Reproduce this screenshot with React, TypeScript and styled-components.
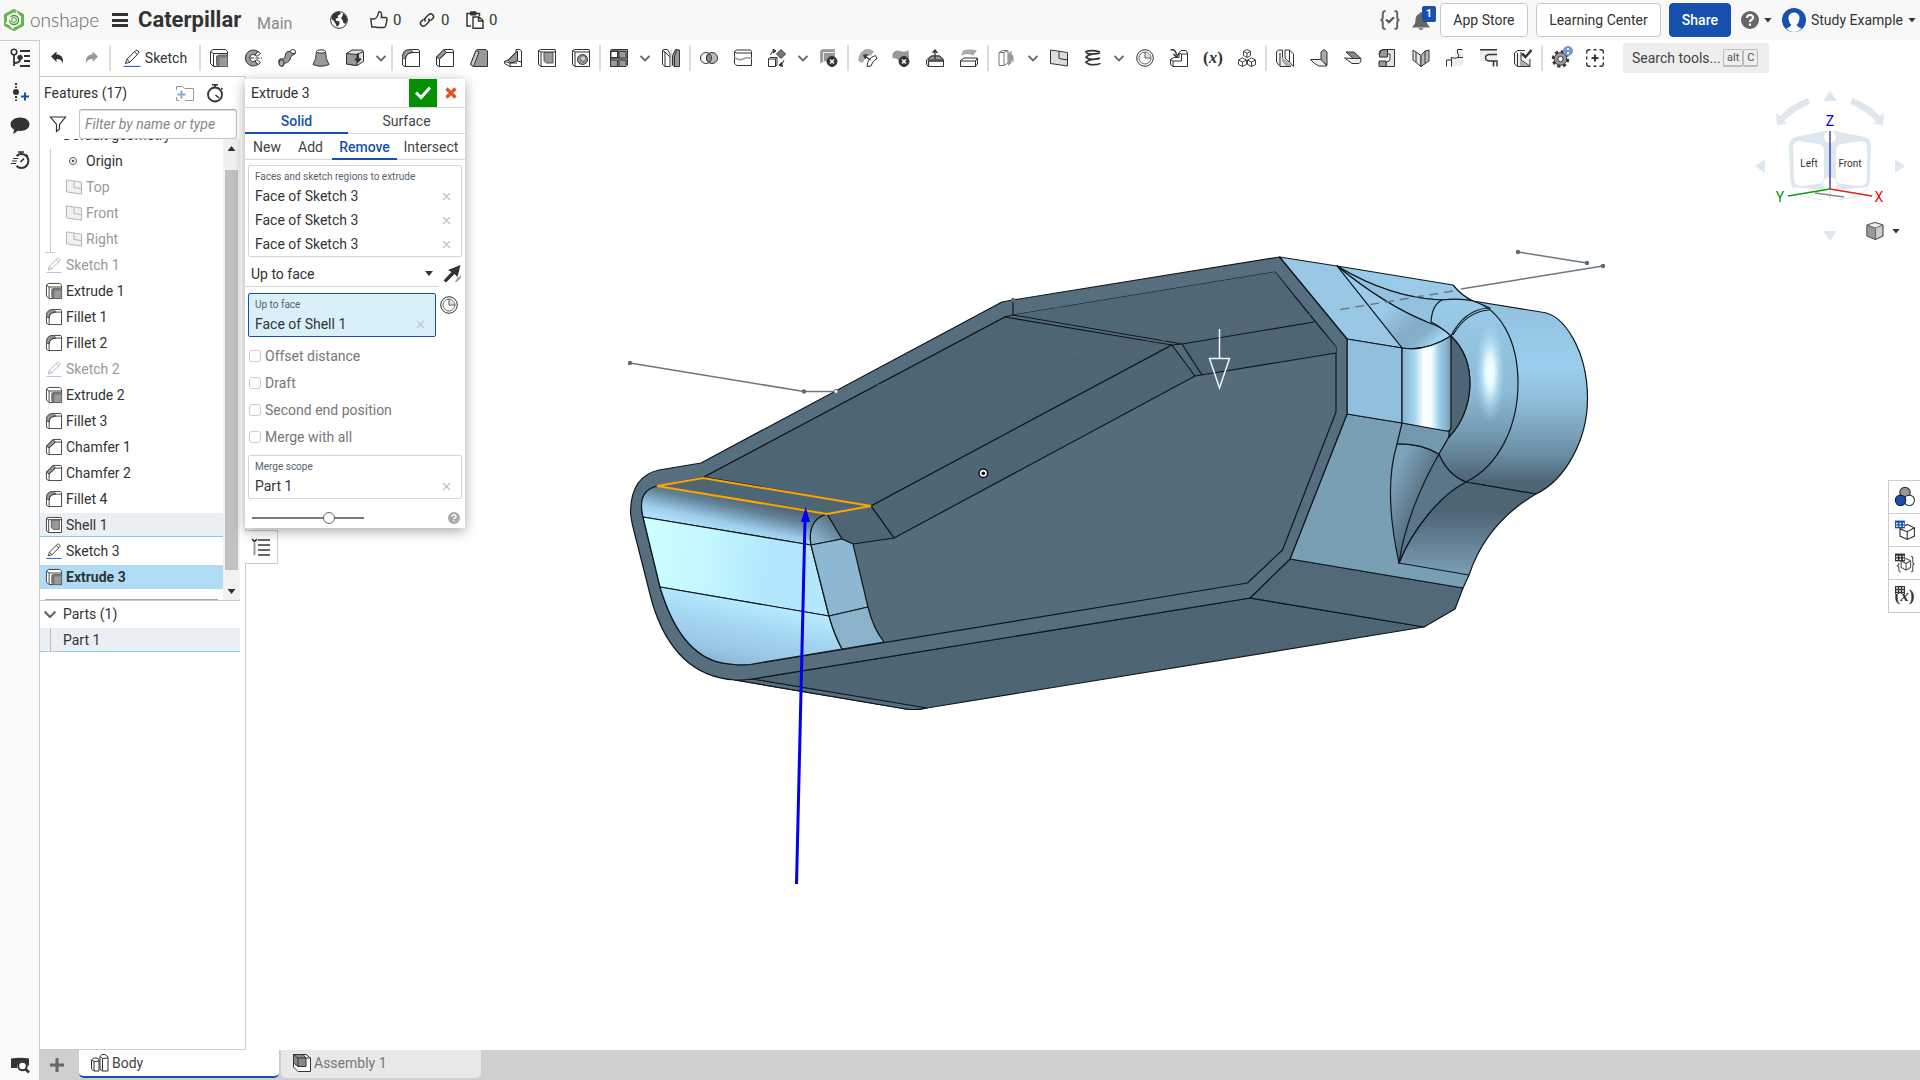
import React from "react";
import styled, { createGlobalStyle, css } from "styled-components";

const ink = "#333333";
const blue = "#1651b0";
const line = "#cccccc";
const gray = "#999999";

const Global = createGlobalStyle`
  *, *::before, *::after { box-sizing: border-box; }
  body { margin: 0; background: #fff; }
  body, button, input, select { font-family: Roboto, "Liberation Sans", sans-serif; font-size: 14px; color: ${ink}; }
  button { border: 0; padding: 0; background: none; cursor: pointer; }
  svg { display: block; flex: none; }
`;

/* ---------- icons, drawn on an 18 unit grid ---------- */

const shapes: Record<string, React.ReactNode> = {
  undo: <path d="M3 7.5L8.5 2.5V5.5C13 5.5 15.5 8 15 14.5C13.500 11 12 10 8.500 10V13Z" fill={ink} stroke="none" />,
  redo: <path d="M16 7.500L10.500 2.500V5.500C6 5.500 3.500 8 4 14.500C5.500 11 7 10 10.500 10V13Z" fill="#999" stroke="none" />,
  sketch: (
    <>
      <path d="M2.500 14.500L3.800 10.300L12.800 1.500Q14 .8 15.200 2T15.500 4.300L6.800 13.200ZM3.800 10.300L6.800 13.200M11.500 2.800L14.400 5.600" fill="#fff" />
      <path d="M.5 17.400H17.500" stroke={blue} />
    </>
  ),
  extrude: (
    <>
      <path d="M.5 2.500L3 .5H15.500L17.500 2.500V17.500H3.500L.5 14.500ZM3.500 17.500V4.500H17.500M.5 2.500L3.500 4.500" fill="#fff" />
      <path d="M6.500 7L9 6H17.500V17.500H9L6.500 16Z" fill="#777" stroke="#666" />
      <path d="M9.500 8.500H17V17H9.500Z" fill="#999" stroke="none" />
    </>
  ),
  revolve: (
    <>
      <path d="M14 2.500A8 8 0 1 0 14 15.500L11 12A3.500 3.500 0 1 1 11 6Z" fill={gray} />
      <path d="M11 6L14 2.500L16.500 4.500L13 7.300ZM11 12L14 15.500L16.500 13.500L13 10.700Z" fill="#fff" />
      <path d="M6 9H18" strokeDasharray="4 1.500" />
    </>
  ),
  sweep: (
    <>
      <path d="M.8 12C1 9 4 10 6 9.500C8 8.500 6.500 3.500 10 2.500L13 2.200L17.300 3.500C17.500 6.500 13 5.500 12.500 8.500C12 13 9 13.500 6.500 14.500C5.500 15.500 6 17.500 3.500 17.300C1.500 17 .8 14 .8 12Z" fill={gray} />
      <ellipse cx="15" cy="2.600" rx="2.500" ry="2" fill="#fff" />
      <ellipse cx="3.500" cy="14" rx="2.500" ry="3.200" fill="#aaa" />
    </>
  ),
  loft: (
    <>
      <path d="M4.500 2.500Q4.500 10 1 15.500Q9 19 17 15.500Q13.500 10 13.500 2.500Z" fill={gray} />
      <ellipse cx="9" cy="2.500" rx="4.500" ry="1.700" fill="#eee" />
    </>
  ),
  thicken: (
    <>
      <path d="M.5 4.500L6 1H16L17.500 2.500V12.500L11 16.500L.5 15Z" fill="#ddd" />
      <path d="M.5 4.500L11 5.500V16.500L.5 15Z" fill={gray} />
      <path d="M11 5.500L17.300 2.500" />
      <path d="M12 4.500V12M9.300 9.500L12 12.500L14.700 9.500" strokeWidth="2" />
    </>
  ),
  fillet: (
    <>
      <path d="M.5 16V7Q1 .5 8 .5H16.500L17.500 2V17.500H3Z" fill="#fff" />
      <path d="M.5 9Q.5 .5 9 .5L11 3.500Q4 3.500 3.500 10Z" fill={gray} stroke="#555" />
      <path d="M3.500 17.500V10Q4 3.500 11 3.500H17.500" />
    </>
  ),
  chamfer: (
    <>
      <path d="M.5 16V8L8 .5H16.500L17.500 2V17.500H3Z" fill="#fff" />
      <path d="M.5 8L8 .5L10.500 3.500L3.500 10Z" fill={gray} />
      <path d="M3.500 17.500V10L10.500 3.500H17.500" />
    </>
  ),
  draft: (
    <>
      <path d="M.5 15.500L6 1.500L8 .5H16L17.500 2V17.500H3.500Z" fill={gray} />
      <path d="M.5 15.500L6 1.500L9 3L3.500 17.500Z" fill="#ccc" />
    </>
  ),
  rib: (
    <>
      <path d="M.5 12.500L4 11L12 3V.5H15.500L17.500 2V17.500H6L.5 14.500Z" fill="#fff" />
      <path d="M4 11.500L13.500 2V12L7 14Z" fill={gray} />
      <path d="M13.500 2V12L17.500 13M.5 12.500L6 14V17.500M6 14H13" />
    </>
  ),
  shell: (
    <>
      <path d="M.5 1.500L2.500 .5H17L17.500 2V17.500H3L.5 15.500ZM3 17.500V3H17.500M.5 1.500L3 3" fill="#fff" />
      <path d="M6 3.500H15V14H8.500L6 12Z" fill={gray} stroke="#555" />
    </>
  ),
  hole: (
    <>
      <path d="M.5 1.500L2.500 .5H17L17.500 2V17.500H3L.5 15.500ZM3 17.500V3H17.500M.5 1.500L3 3" fill="#fff" />
      <circle cx="10.500" cy="10.500" r="5" fill={gray} />
      <circle cx="11" cy="9.500" r="2.800" fill="#ccc" stroke="#666" />
    </>
  ),
  pattern: (
    <>
      <path d="M.5 1.500L2 .5H17.500V16L16 17.500H.5Z" fill={gray} />
      <path d="M1 2H8V8.500H1Z" fill="#fff" />
      <path d="M9 .5V17.500M.5 9H17.500M7.500 2V8M7.500 11V17M16 2.500V8M16 11V16M1 2.500H7M10 2.500H16M1 11H7M10 11H16" />
    </>
  ),
  mirror: (
    <>
      <path d="M.5 1.500L2 .5H5.500L8 5V17.500H3L.5 15.500ZM3 17.500V3L.5 1.500M3 3L8 8" fill="#fff" />
      <path d="M10.500 6.500L13.500 .5L17.500 1V17.500H12L10.500 16Z" fill={gray} />
      <path d="M12.500 17V7L15 1" />
      <path d="M9.300 0V18" stroke="#ccc" />
    </>
  ),
  boolean: (
    <>
      <circle cx="6" cy="9" r="5.500" fill="#fff" />
      <circle cx="12" cy="9" r="5.500" fill="#bbb" />
      <path d="M9 4.400A5.500 5.500 0 0 1 9 13.600A5.500 5.500 0 0 1 9 4.400Z" fill="#888" />
    </>
  ),
  split: (
    <>
      <path d="M.5 2.500L2.500 1H16.500L17.500 2.500V16.500H3L.5 14.500ZM.5 3L3 4H17.500" fill="#fff" />
      <path d="M0 8Q5 12 9 10T18 9.500" stroke="#999" strokeWidth="1.500" />
    </>
  ),
  transform: (
    <>
      <path d="M13 .5L17.500 5L13 9.500L8.500 5Z" fill="#777" />
      <path d="M.5 10L2 8.500H9V16L7.500 17.500H.5ZM.5 10H7.500V17.500M7.500 10L9 8.500" fill="#fff" />
      <path d="M2.500 6Q3 2.500 6.500 2M16 11Q15 15 12 16" />
      <path d="M5 .2L8 1.800L5.500 4ZM13.500 13.500L11 16.300L14.500 17.500Z" fill={ink} />
    </>
  ),
  deletePart: (
    <>
      <path d="M.5 2L2 .5H14.500V12H3.500L.5 14Z" fill={gray} stroke="#aaa" />
      <path d="M3.500 12V3.500H14.500" stroke="#eee" />
      <circle cx="12" cy="12.500" r="5" fill={ink} />
      <path d="M10 10.500L14 14.500M14 10.500L10 14.500" stroke="#fff" strokeWidth="1.500" />
    </>
  ),
  modifyFillet: (
    <>
      <path d="M0 12Q1 3 7 .5Q12 -1 16 2.500L13 6.500Q7 6 5 14Z" fill="#aaa" stroke="none" />
      <path d="M9 17.500Q9.500 9 17.500 6.500L19 9.500Q14 12 13 17Z" fill="#fff" />
      <path d="M12.500 11L6 6.500M9.800 5.800L6 6.300L7.500 9.800" strokeWidth="1.500" />
    </>
  ),
  deleteFace: (
    <>
      <path d="M.5 5Q3 0 8 2T16.500 1L17 9L9 14Q6 9 .5 9Z" fill={gray} stroke="none" />
      <circle cx="12" cy="12.500" r="5" fill={ink} />
      <path d="M10 10.500L14 14.500M14 10.500L10 14.500" stroke="#fff" strokeWidth="1.500" />
    </>
  ),
  moveFace: (
    <>
      <path d="M.5 11L5 7H14L17.500 11V17.500H2.500L.5 15.500Z" fill="#fff" />
      <path d="M2 10.500L5.500 7H14L17 11H3Z" fill={gray} />
      <path d="M2.500 17.500V12H17.500M9 10V2M6.500 4L9 1L11.500 4" strokeWidth="1.300" />
    </>
  ),
  replaceFace: (
    <>
      <path d="M3 1.500Q9 -.5 17 1.500L13 6.500Q8 3.500 1 6.500Z" fill="#aaa" stroke="none" />
      <path d="M.5 11.500L4 9H17.500V15L15.500 17.500H.5ZM.5 12H15.500V17.500M15.500 12L17.500 9" fill="#fff" />
    </>
  ),
  sheet: (
    <>
      <path d="M1 3.500L5 1.500H10V14L6 16.500H1ZM1 3.500H6V16.500M6 3.500L10 1.500" fill="#fff" stroke="#777" />
      <path d="M10 5L13.500 1.500V14L10 17ZM12.500 4L15.500 7V13L12.500 11Z" fill={gray} stroke="none" />
    </>
  ),
  plane: (
    <>
      <path d="M.5 1L17.500 3.500V17L.5 14.500Z" fill="#ddd" />
      <path d="M9 2.500V9.500L17.500 11" />
    </>
  ),
  helix: (
    <path d="M16 3Q8 .5 2 2.500Q2 5 8 5T16 3.500M15 4.500Q5 5 2 8Q4 10.500 9 10.300T16 9M15 10Q6 10 2 13Q4 16 10 15.700T16 14" strokeWidth="1.700" />
  ),
  clock: (
    <>
      <circle cx="9" cy="9" r="8.300" fill="#fff" />
      <circle cx="9" cy="9" r="6" fill="#fff" stroke="#666" />
      <path d="M9.500 3.500Q14 4 14.500 8.500H9.500Z" fill="#ddd" stroke="none" />
      <path d="M9 3V9H15" stroke="#555" />
    </>
  ),
  derived: (
    <>
      <path d="M.5 10.500L4 8.500H9V4L11 1.500H16L17.500 4V17.500H3L.5 15.500ZM.5 10.500L3 12H11.500V5H17.500M3 12V17.500M9 4L11.500 5" fill="#fff" />
      <path d="M.5 1Q6 0 6.500 6M3.500 5L6.500 8L9 4.500" strokeWidth="1.500" />
    </>
  ),
  cubes: (
    <path d="M9 .5L12.500 2.300V6.500L9 8.500L5.500 6.500V2.300ZM5.500 2.300L9 4.300L12.500 2.300M9 4.300V8.500M4.500 8.800L8.500 11V15.500L4.500 17.500L.5 15.500V11ZM.5 11L4.500 13L8.500 11M4.500 13V17.500M13.500 8.800L17.500 11V15.500L13.500 17.500L9.500 15.500V11ZM9.500 11L13.500 13L17.500 11M13.500 13V17.500" stroke="#444" fill="#fff" />
  ),
  sm1: (
    <>
      <path d="M.5 2.500L2.500 1H6.500V12L15 17.500H4L.5 13Z" fill="#eee" />
      <path d="M6 8L16 17H10L6 12Z" fill="#aaa" stroke="none" />
      <path d="M9 9V1H13.500L17.500 5V17.500L13.500 13V1M9 9L13 13M4 4V17" />
    </>
  ),
  sm2: (
    <>
      <path d="M11 3L14 .5L17 3V16L11 12Z" fill="#aaa" />
      <path d="M.5 10.500H11L17 17H9Q4 15 .5 10.500Z" fill="#eee" />
    </>
  ),
  sm3: (
    <>
      <path d="M2 3H10L17 9.500H9Z" fill="#888" />
      <path d="M.5 9L9 9.500H17Q17 14.500 14 14.500H8Z" fill="#eee" />
    </>
  ),
  sm4: (
    <>
      <path d="M5 .5H16.500V17.500H8V13Q12 13 12 9.500V5H4.500V8Q1 8 1 4.500Q1 1 5 .5Z" fill="#e4e4e4" />
      <path d="M1.500 5Q2 1 5 .8H9.500V8H1.500ZM1 12H8V17.500H1Z" fill="#999" />
    </>
  ),
  sm5: (
    <>
      <path d="M1 1L9 6.500V17.500L1 11Z" fill="#e4e4e4" />
      <path d="M9 6.500L13 2L17 1V12L9 17.500Z" fill="#bbb" />
      <path d="M4 3V13M13 2V14" />
    </>
  ),
  sm6: (
    <>
      <path d="M9 1H17V10H9ZM1 9H17V17H6V12H1Z" fill="#eee" stroke="none" />
      <path d="M16.500 .5H11.500V4Q14 6 12 8.500Q9 10 6 8.500Q5 7 5.500 11H.5M.5 11V17.500M5.500 17.500V11M12 8.500H17" />
    </>
  ),
  sm7: (
    <>
      <path d="M0 1H17V17H12V12H0Z" fill="#eee" stroke="none" />
      <path d="M0 .7H17M17 5.500H9Q5.500 6 5.500 9Q6 12 9 12H17V17.500M13.500 12V17.500" strokeWidth="1.400" />
    </>
  ),
  sm8: (
    <>
      <path d="M.5 4L3.500 1.500H11M.5 4V15L3.500 17.500H16V10M3.500 4V17M7 3V11L16 17" fill="#eee" />
      <path d="M6 11L15 17H6Z" fill="#aaa" stroke="none" />
      <path d="M8 4.500L11.500 8L17.500 1" strokeWidth="2.500" />
    </>
  ),
  gear: (
    <>
      <circle cx="8.500" cy="10" r="7.500" strokeWidth="2.500" strokeDasharray="3.200 2.690" />
      <circle cx="8.500" cy="10" r="6.300" fill={gray} />
      <circle cx="8.500" cy="10" r="2.700" fill="#fff" />
      <circle cx="16" cy="2" r="5" fill="#6f9bd1" stroke="none" />
      <path d="M16 -1V1M16 3V5" stroke="#fff" strokeWidth="1.700" />
    </>
  ),
  addTool: (
    <>
      <path d="M.7 4.500V3Q.7 .7 3 .7H4.500M7.500 .7H10.500M13.500 .7H15Q17.300 .7 17.300 3V4.500M17.300 7.500V10.500M17.300 13.500V15Q17.300 17.300 15 17.300H13.500M10.500 17.300H7.500M4.500 17.300H3Q.7 17.300 .7 15V13.500M.7 10.500V7.500" strokeWidth="1.400" />
      <path d="M9 5.500V12.500M5.500 9H12.500" strokeWidth="2" />
    </>
  ),
  featureList: (
    <>
      <circle cx="3" cy="3" r="2.800" strokeWidth="1.500" />
      <path d="M3 6V17M3 14Q8.500 14 9 11M9 2H19M13 7H19M13 12H19M9 17H19" strokeWidth="1.800" />
      <circle cx="9" cy="8.500" r="2.300" fill={ink} />
    </>
  ),
  insertFeature: (
    <>
      <path d="M5 0V2M5 3.500V5M5 13V15M5 16.500V18" strokeWidth="2" />
      <circle cx="5" cy="9" r="3" fill={ink} stroke="none" />
      <path d="M14 9.500V17.500M10 13.500H18" stroke={blue} strokeWidth="2" />
    </>
  ),
  comment: <path d="M9 .5C14.500 .5 18.500 3.300 18.500 7.300S14.500 14 9 14Q7.500 14 6.500 13.800Q4.500 16.500 1.500 16.800Q3.200 15 3 12.600Q-.5 10.800 -.5 7.300C-.5 3.300 4 .5 9 .5Z" fill={ink} stroke="none" />,
  history: (
    <>
      <path d="M5.500 5A7 7 0 1 1 5.500 15" strokeWidth="2" />
      <path d="M7 1H13M10 1V4M15 3.500L17 5.500M9.500 11L13 7.500" strokeWidth="1.700" />
      <path d="M2 7.500H7M1 10H6M0 12.500H5" strokeWidth="1.200" />
    </>
  ),
  findTab: (
    <>
      <path d="M0 2.500Q9 1 18 2.500V10L12 5Q6 5 6 12H0Z" fill={ink} stroke="none" />
      <circle cx="11.500" cy="10" r="4.300" fill="#fff" strokeWidth="2" />
      <path d="M14.500 13L18 16.500" strokeWidth="2.500" />
    </>
  ),
  stopwatch: (
    <>
      <circle cx="9" cy="10.500" r="7" strokeWidth="1.800" />
      <path d="M6 .8H12M9 1V4M15 4L16.500 5.500M9.500 11L13 14" strokeWidth="1.600" />
    </>
  ),
  newFolder: (
    <>
      <path d="M.5 6V2.500H6.500L8.500 4.500H17.500V16.500H9M.5 13V16.500H3" stroke="#999" />
      <path d="M5.500 6.500V14.500M1.500 10.500H9.500" stroke="#86a9d8" strokeWidth="2" />
    </>
  ),
  filter: <path d="M1.500 2H16.500L10.500 9.500V14L7.500 16.500V9.500Z" strokeWidth="1.200" />,
  origin: (
    <>
      <circle cx="9" cy="9" r="3.500" stroke="#555" />
      <circle cx="9" cy="9" r="1.300" fill="#555" stroke="none" />
    </>
  ),
  globe: (
    <>
      <circle cx="9" cy="9" r="8.400" fill="#fff" />
      <path d="M2 4.500Q4.500 1 9 .8L11 2.500L7.500 5L8.500 6.500L5.500 8L6.500 10L9.500 10.500L9.500 13L7 16L5.500 12.500L3.500 9.500L1.500 8ZM13 2L16 5L17.200 9L15.500 13L13.500 12L12.500 9L11 7L12.500 5Z" fill={ink} stroke="none" />
    </>
  ),
  thumb: <path d="M.8 8H4.500Q8 6 8.300 2Q8.500 .6 10 .8Q12.300 1.500 11.300 6.500H16Q17.500 7 17 8.500L15.800 14.500Q15.500 16.300 14 16.500H8Q6 16 4.500 16H1.800Z" strokeWidth="1.400" />,
  link: <path d="M7.500 10.500Q5.800 8.500 7.500 6.800L11 3.300Q13 2 14.700 3.700T15 7.300L12.500 9.800M10.500 7.500Q12.200 9.500 10.500 11.200L7 14.700Q5 16 3.300 14.300T3 10.700L5.500 8.200" strokeWidth="1.500" />,
  copy: (
    <>
      <path d="M5 15H1V2.500H4.500M10 2.500H13.500V5" strokeWidth="1.500" />
      <path d="M4.500 .8H10V4H4.500Z" fill={ink} />
      <path d="M7 6H13L17 9.500V17.300H7ZM12.500 6V10H17" fill="#fff" strokeWidth="1.400" />
    </>
  ),
  bracesCheck: (
    <>
      <path d="M5 1Q2.500 1 2.500 3V6.500Q2.500 9 .5 9Q2.500 9 2.500 11.500V15Q2.500 17 5 17M13 1Q15.500 1 15.500 3V6.500Q15.500 9 17.500 9Q15.500 9 15.500 11.500V15Q15.500 17 13 17" stroke="#666" strokeWidth="1.800" />
      <path d="M5.500 8.500L8 11L12.500 6.500" stroke="#555" strokeWidth="2" />
    </>
  ),
  bell: <path d="M9 0Q10.300 0 10.300 1.800Q14.500 3 14.500 8Q14.500 12 17.500 14.500V15.500H.5V14.500Q3.500 12 3.500 8Q3.500 3 7.700 1.800Q7.700 0 9 0ZM6.500 16.300H11.500Q11 18 9 18T6.500 16.300Z" fill="#666" stroke="none" />,
  help: (
    <>
      <circle cx="9" cy="9" r="9" fill="#666" stroke="none" />
      <path d="M6 6.800Q6.200 4 9 4T12 6.500Q12 8 10.500 8.800Q9 9.500 9 11M9 12.500V14.700" stroke="#fff" strokeWidth="2.200" />
    </>
  ),
  flip: (
    <>
      <path d="M17.500 0L14.500 12L11.500 9L3 17.500L.5 15.500L8.500 7L5 5Z" fill={ink} stroke="none" />
      <path d="M18.500 10L17 14L13 17.500L12 16.500L15 12.500Z" fill="#999" stroke="none" />
    </>
  ),
  outline: (
    <>
      <path d="M6 2H18M6 7H18M6 12H18M6 17H18" strokeWidth="1.300" />
      <path d="M2.500 5V17" stroke="#999" strokeWidth="2" />
      <path d="M0 1L2.500 3.500L5 1" strokeWidth="1.700" />
    </>
  ),
  body: (
    <>
      <path d="M.5 6L3 4H6L8 5.500V17H3L.5 15ZM3 17V7.500L.5 6M3 7.500L8 7" fill="#fff" />
      <path d="M9 2.500L11 .5H14L17 3V17H11.500L9 15ZM11.500 17V4.500L9 2.500M11.500 4.500L17 4" fill="#fff" />
    </>
  ),
  assembly: (
    <>
      <path d="M.5 .5H13L17.500 4V17.500H5L.5 13ZM17.500 4H13" fill="#fff" />
      <path d="M.5 .5H10L13 4V12.500H5L.5 9Z" fill="#888" />
      <path d="M.5 .5L5 4H13M5 4V12.500" />
    </>
  ),
  appearance: (
    <>
      <circle cx="9" cy="5" r="4.700" fill="#999" />
      <circle cx="12.800" cy="12" r="4.700" fill="#fff" />
      <circle cx="5" cy="12" r="4.700" fill={blue} stroke="#123" />
    </>
  ),
  partTable: (
    <>
      <path d="M11 4L17.500 7V14.500L11 17.500L4.500 14.500V8ZM4.500 8L11 10.500L17.500 7M11 10.500V17.500" fill="#fff" />
      <path d="M0 .5H9V7.500H0Z" fill={blue} stroke="none" />
      <path d="M1 3.200H2.500M4 3.200H5.500M7 3.200H8.500M1 5.600H2.500M4 5.600H5.500M7 5.600H8.500" stroke="#fff" strokeWidth="1.400" />
    </>
  ),
  cutTable: (
    <>
      <path d="M10 5L14 7V13L10 15.500L5.500 13V7ZM5.500 7L10 9.500L14 7M10 9.500V15.500" fill="#fff" stroke="#555" />
      <path d="M3.500 9Q3.500 11.500 1.500 11.500Q3.500 11.500 3.500 14V16L5 17.500M14.500 3Q16 3 16 5V8Q16 10 17.500 10Q16 10 16 12V15Q16 17 14.500 17" stroke="#555" />
      <path d="M0 .5H9V7.500H0Z" fill={ink} stroke="none" />
      <path d="M1 3.200H2.500M4 3.200H5.500M7 3.200H8.500M1 5.600H2.500M4 5.600H5.500M7 5.600H8.500" stroke="#fff" strokeWidth="1.400" />
    </>
  ),
  viewCube: (
    <>
      <path d="M9 .5L17 3V14L9.500 17.500L1 14V3Z" fill="#ccc" />
      <path d="M1 3L9.500 6V17.500L1 14Z" fill="#999" stroke="#666" />
      <path d="M1 3L9 .5L17 3L9.500 6Z" fill="#eee" stroke="#666" />
    </>
  ),
};

type IconProps = { name: string; size?: number; dim?: boolean };
const Icon = ({ name, size = 18, dim }: IconProps) => (
  <svg width={size} height={size} viewBox="0 0 18 18" fill="none" stroke={ink} strokeWidth="1" opacity={dim ? 0.4 : 1} overflow="visible" aria-hidden="true">
    {shapes[name]}
  </svg>
);

const Caret = styled.span`
  width: 8px;
  height: 5px;
  flex: none;
  background: ${ink};
  clip-path: polygon(0 0, 100% 0, 50% 100%);
`;

const Chevron = ({ size = 10 }: { size?: number }) => (
  <svg width={size} height={size} viewBox="0 0 10 10" fill="none" stroke="#666" strokeWidth="1.800" aria-hidden="true">
    <path d="M.5 3L5 7.500L9.500 3" />
  </svg>
);

/* ---------- page frame ---------- */

const Page = styled.div`
  display: flex;
  flex-direction: column;
  height: 100vh;
  overflow: hidden;
`;

const Header = styled.header`
  display: flex;
  align-items: center;
  flex: none;
  height: 40px;
  padding: 0 4px;
  background: #f8f8f8;
  white-space: nowrap;
`;

const Brand = styled.a`
  display: flex;
  align-items: center;
  gap: 6px;
  width: 108px;
  color: #666;
  font: 300 19px/24px Lato, sans-serif;
  text-decoration: none;
`;

const Hamburger = styled.button`
  display: flex;
  flex-direction: column;
  justify-content: space-between;
  width: 16px;
  height: 14px;
  margin-right: 10px;
  span { height: 3px; background: ${ink}; }
`;

const DocTitle = styled.h1`
  margin: 0;
  width: 119px;
  font-size: 22px;
  line-height: 28px;
  font-weight: 700;
`;

const Branch = styled.span`
  width: 73px;
  padding-top: 6px;
  font-size: 16px;
  color: #888;
`;

const Stat = styled.button<{ $w?: number }>`
  display: flex;
  align-items: center;
  gap: 5px;
  width: ${(p) => p.$w ?? 48}px;
  font-size: 15px;
`;

const HeaderRight = styled.div`
  display: flex;
  align-items: center;
  gap: 8px;
  margin-left: auto;
`;

const HeaderButton = styled.button<{ $w: number; $primary?: boolean }>`
  width: ${(p) => p.$w}px;
  height: 34px;
  border: 1px solid ${(p) => (p.$primary ? blue : "#c8c8c8")};
  border-radius: 4px;
  background: ${(p) => (p.$primary ? blue : "#fff")};
  color: ${(p) => (p.$primary ? "#fff" : ink)};
  font-weight: ${(p) => (p.$primary ? 500 : 400)};
`;

const BellButton = styled.button`
  position: relative;
  width: 20px;
  height: 34px;
  margin-left: 4px;
  padding-top: 2px;
  display: flex;
  align-items: center;
`;

const Badge = styled.span`
  position: absolute;
  top: 3px;
  left: 10px;
  width: 14px;
  height: 16px;
  border-radius: 2px;
  background: ${blue};
  color: #fff;
  font: 700 11px/16px Roboto, sans-serif;
  text-align: center;
`;

const MenuButton = styled.button`
  display: flex;
  align-items: center;
  gap: 5px;
  margin-left: 2px;
`;

const Main = styled.div`
  display: flex;
  flex: 1;
  min-height: 0;
`;

const Rail = styled.nav`
  display: flex;
  flex-direction: column;
  flex: none;
  width: 40px;
  border-top: 1px solid ${line};
  border-right: 1px solid ${line};
  background: #fafafa;
`;

const RailButton = styled.button<{ $last?: boolean }>`
  display: flex;
  align-items: center;
  justify-content: center;
  height: 34px;
  ${(p) => p.$last && css`height: 30px; margin-top: auto;`}
`;

const Column = styled.div`
  display: flex;
  flex-direction: column;
  flex: 1;
  min-width: 0;
`;

/* ---------- toolbar ---------- */

const Toolbar = styled.div`
  display: flex;
  align-items: center;
  flex: none;
  height: 36px;
`;

const ToolButton = styled.button<{ $w?: number }>`
  display: flex;
  align-items: center;
  justify-content: center;
  gap: 4px;
  flex: none;
  width: ${(p) => p.$w ?? 34}px;
  height: 30px;
`;

const Divider = styled.span`
  flex: none;
  width: 2px;
  height: 26px;
  margin: 0 1px;
  background: #dcdcdc;
`;

const VarText = styled.span`
  font: italic 700 17px/20px "Liberation Serif", serif;
  i { font-style: normal; }
`;

const SearchBox = styled.label`
  display: flex;
  align-items: center;
  width: 146px;
  height: 30px;
  margin-left: 11px;
  padding: 0 9px;
  border-radius: 3px;
  background: #eee;
  input {
    width: 91px;
    padding: 0;
    border: 0;
    background: none;
    outline: 0;
  }
  input::placeholder { color: #444; opacity: 1; }
`;

const Key = styled.kbd`
  height: 18px;
  padding: 0 3px;
  border: 1px solid #bbb;
  border-bottom-width: 2px;
  border-radius: 2px;
  font: 11px/15px Roboto, sans-serif;
  color: #555;
`;

const toolGroups: string[][] = [
  ["extrude", "revolve", "sweep", "loft", "thicken", "v"],
  ["fillet", "chamfer", "draft", "rib", "shell", "hole"],
  ["pattern", "v", "mirror"],
  ["boolean", "split", "transform", "v", "deletePart"],
  ["modifyFillet", "deleteFace", "moveFace", "replaceFace"],
  ["sheet", "v", "plane", "helix", "v", "clock", "derived", "x", "cubes"],
  ["sm1", "sm2", "sm3", "sm4", "sm5", "sm6", "sm7", "sm8"],
  ["gear", "addTool"],
];

const Tool = ({ name }: { name: string }) => {
  if (name === "v") return <ToolButton $w={18} aria-label="More tools"><Chevron /></ToolButton>;
  return (
    <ToolButton aria-label={name}>
      {name === "x" ? <VarText><i>(</i>x<i>)</i></VarText> : <Icon name={name} />}
    </ToolButton>
  );
};

/* ---------- feature panel ---------- */

const Workspace = styled.div`
  display: flex;
  flex: 1;
  min-height: 0;
`;

const Panel = styled.aside`
  display: flex;
  flex-direction: column;
  flex: none;
  width: 206px;
  border: 1px solid ${line};
  border-left: 0;
`;

const PanelHead = styled.div`
  display: flex;
  align-items: center;
  height: 32px;
  padding: 0 21px 0 4px;
  gap: 12px;
  h2 { margin: 0 auto 0 0; font-size: 14px; font-weight: 400; }
`;

const FilterRow = styled.label`
  display: flex;
  align-items: center;
  height: 30px;
  padding: 0 8px 0 9px;
  gap: 12px;
  input {
    flex: 1;
    min-width: 0;
    height: 30px;
    padding: 0 5px;
    border: 1px solid #c4c4c4;
    border-top-color: #aaa;
    border-radius: 3px;
    box-shadow: inset 0 1px 1px #ddd;
    font-style: italic;
  }
  input::placeholder { color: #888; opacity: 1; }
`;

const ListArea = styled.div`
  display: flex;
  flex: none;
  height: 462px;
  width: 200px;
  border-bottom: 1px solid ${line};
`;

const FeatureList = styled.div`
  display: flex;
  flex-direction: column;
  justify-content: flex-end;
  flex: 1;
  overflow: hidden;
`;

const Row = styled.div<{ $tone?: "hover" | "active"; $dim?: boolean; $left?: number }>`
  display: flex;
  align-items: center;
  flex: none;
  gap: 4px;
  height: 24px;
  margin-bottom: 2px;
  padding-left: ${(p) => p.$left ?? 6}px;
  color: ${(p) => (p.$dim ? "#999" : ink)};
  ${(p) => p.$tone === "hover" && css`background: #eaeff4; border-bottom: 1px solid #86c8f0;`}
  ${(p) => p.$tone === "active" && css`background: #b0ddf5; font-weight: 700;`}
`;

const Branches = styled.div`
  position: relative;
  flex: none;
  margin: 0 0 0 10px;
  border-left: 1px solid ${line};
  &::after {
    content: "";
    position: absolute;
    bottom: 0;
    left: -6px;
    width: 10px;
    height: 1px;
    background: ${line};
  }
`;

const RollbackBar = styled.div`
  flex: none;
  height: 1px;
  margin: 8px 5px 0;
  background: #aaa;
`;

const ScrollTrack = styled.div`
  display: flex;
  flex-direction: column;
  align-items: center;
  justify-content: space-between;
  width: 17px;
  padding: 7px 2px 6px;
  background: #f1f1f1;
`;

const ScrollThumb = styled.span`
  width: 13px;
  flex: 1;
  margin: 19px 0;
  background: #c1c1c1;
`;

const UpCaret = styled(Caret)`
  clip-path: polygon(50% 0, 100% 100%, 0 100%);
`;

const PartsHead = styled.button`
  display: flex;
  align-items: center;
  height: 27px;
  gap: 7px;
  padding: 0 0 2px 4px;
`;

const PartBranch = styled(Branches)`
  width: 190px;
  ${Row} { margin: 0 0 0 -11px; padding-left: 23px; }
  &::before { content: ""; position: absolute; left: -1px; top: 0; height: 24px; width: 1px; background: #bbb; }
`;

const features: { icon: string; text: string; dim?: boolean; tone?: "hover" | "active" }[] = [
  { icon: "sketch", text: "Sketch 1", dim: true },
  { icon: "extrude", text: "Extrude 1" },
  { icon: "fillet", text: "Fillet 1" },
  { icon: "fillet", text: "Fillet 2" },
  { icon: "sketch", text: "Sketch 2", dim: true },
  { icon: "extrude", text: "Extrude 2" },
  { icon: "fillet", text: "Fillet 3" },
  { icon: "chamfer", text: "Chamfer 1" },
  { icon: "chamfer", text: "Chamfer 2" },
  { icon: "fillet", text: "Fillet 4" },
  { icon: "shell", text: "Shell 1", tone: "hover" },
  { icon: "sketch", text: "Sketch 3" },
  { icon: "extrude", text: "Extrude 3", tone: "active" },
];

/* ---------- viewport and floating parts ---------- */

const Viewport = styled.main`
  position: relative;
  flex: 1;
  min-width: 0;
`;

const Scene = styled.svg`
  width: 100%;
  height: 100%;
`;

const Dialog = styled.form`
  position: absolute;
  left: -1px;
  top: 3px;
  width: 220px;
  background: #fff;
  box-shadow: 0 3px 12px rgba(0, 0, 0, 0.35);
`;

const DialogHead = styled.div`
  display: flex;
  align-items: center;
  height: 29px;
  border-bottom: 1px solid #d8d8d8;
  h2 { flex: 1; margin: 0; padding-left: 6px; font-size: 14px; font-weight: 400; }
`;

const HeadButton = styled.button<{ $ok?: boolean }>`
  display: flex;
  align-items: center;
  justify-content: center;
  width: 28px;
  height: 28px;
  background: ${(p) => (p.$ok ? "#039103" : "#fff")};
`;

const Tabs = styled.div`
  display: flex;
  height: 26px;
  border-bottom: 1px solid #d8d8d8;
`;

const Tab = styled.button<{ $w: number; $on?: boolean }>`
  flex: none;
  width: ${(p) => p.$w}px;
  height: 26px;
  padding-top: 1px;
  border-bottom: 2px solid ${(p) => (p.$on ? blue : "transparent")};
  color: ${(p) => (p.$on ? blue : "#444")};
  font-weight: ${(p) => (p.$on ? 500 : 400)};
`;

const PickBox = styled.div<{ $active?: boolean }>`
  flex: 1;
  margin: 0 3px;
  padding: 4px 6px 0;
  border: 1px solid ${(p) => (p.$active ? blue : "#d4d4d4")};
  border-radius: 2px;
  background: ${(p) => (p.$active ? "#d9f0f9" : "#fff")};
  small { display: block; font-size: 10px; line-height: 14px; color: #566270; }
`;

const Pick = styled.div`
  display: flex;
  align-items: center;
  justify-content: space-between;
  height: 24px;
  padding-right: 4px;
`;

const Remove = () => (
  <button type="button" aria-label="Remove">
    <svg width="9" height="9" viewBox="0 0 9 9" stroke="#bcc4c8" strokeWidth="1.300"><path d="M1 1L8 8M8 1L1 8" /></svg>
  </button>
);

const SelectRow = styled.div`
  display: flex;
  align-items: center;
  height: 30px;
  padding-right: 4px;
  margin-bottom: 6px;
`;

const SelectWrap = styled.div`
  display: flex;
  align-items: center;
  flex: 1;
  height: 30px;
  margin-right: 4px;
  padding: 4px 6px 0;
  border-bottom: 1px solid #d8d8d8;
  select {
    flex: 1;
    height: 24px;
    padding: 0;
    border: 0;
    appearance: none;
    background: none;
  }
`;

const FlipButton = styled.button`
  padding-top: 4px;
`;

const SideBySide = styled.div`
  display: flex;
  align-items: flex-start;
  padding-right: 7px;
  ${PickBox} { margin-right: 4px; }
`;

const SideButton = styled.button`
  padding-top: 3px;
`;

const Check = styled.label`
  display: flex;
  align-items: center;
  gap: 4px;
  height: 27px;
  padding-left: 4px;
  color: #777;
  input {
    appearance: none;
    width: 12px;
    height: 12px;
    margin: 0;
    border: 1px solid #ccc;
    border-radius: 3px;
    background: #fff;
  }
`;

const Checks = styled.div`
  padding: 5px 0;
`;

const DialogFoot = styled.div`
  display: flex;
  align-items: center;
  justify-content: space-between;
  height: 29px;
  padding: 8px 5px 0 7px;
  input {
    appearance: none;
    width: 112px;
    height: 2px;
    margin: 0;
    background: #777;
  }
  input::-webkit-slider-thumb {
    appearance: none;
    width: 12px;
    height: 12px;
    border: 1px solid #666;
    border-radius: 50%;
    background: #fff;
  }
  button { opacity: 0.55; }
`;

const OutlineButton = styled.button`
  position: absolute;
  left: -2px;
  top: 454px;
  display: flex;
  align-items: center;
  justify-content: center;
  width: 34px;
  height: 34px;
  border: 1px solid ${line};
  border-left-color: #fff;
  background: #fff;
`;

const ViewNav = styled.div`
  position: absolute;
  top: 0;
  right: 0;
  width: 170px;
  height: 170px;
  text { font: 14px Roboto, sans-serif; text-anchor: middle; }
  .face { font-size: 10px; fill: #333; }
`;

const ViewMenu = styled.button`
  position: absolute;
  top: 146px;
  right: 20px;
  display: flex;
  align-items: center;
  gap: 8px;
`;

const Dock = styled.div`
  position: absolute;
  top: 404px;
  right: 0;
  display: flex;
  flex-direction: column;
  width: 32px;
  border: 1px solid ${line};
  border-right: 0;
  background: #fff;
`;

const DockButton = styled.button`
  position: relative;
  display: flex;
  align-items: center;
  justify-content: center;
  height: 32px;
  & + & { height: 33px; border-top: 1px solid ${line}; }
`;

const MiniGrid = styled.span`
  position: absolute;
  left: 6px;
  top: 6px;
  width: 10px;
  height: 8px;
  background: repeating-linear-gradient(90deg, ${ink} 0 1px, transparent 1px 3px), repeating-linear-gradient(${ink} 0 1px, #bbb 1px 3px);
`;

/* ---------- sheet tabs ---------- */

const SheetBar = styled.footer`
  display: flex;
  flex: none;
  height: 30px;
  background: #cfcfcf;
`;

const AddSheet = styled.button`
  display: flex;
  align-items: center;
  justify-content: center;
  width: 39px;
  padding-right: 6px;
`;

const SheetTab = styled.button<{ $on?: boolean }>`
  display: flex;
  align-items: center;
  gap: 3px;
  width: 200px;
  height: 28px;
  margin-right: 2px;
  padding: 0 12px;
  border-radius: 0 0 5px 5px;
  border-bottom: 2px solid ${(p) => (p.$on ? blue : "#e8e8e8")};
  background: ${(p) => (p.$on ? "#fff" : "#e8e8e8")};
  color: ${(p) => (p.$on ? "#444" : "#777")};
`;

/* ---------- model drawing ---------- */

const edge = "#10181d";
const wall = "#4e6574";
const rim = "#566e7e";

const Model = () => (
  <Scene viewBox="246 76 1674 974" role="img" aria-label="Caterpillar part, shaded with edges">
    <defs>
      <linearGradient id="noseTop" gradientUnits="userSpaceOnUse" x1="738" y1="497" x2="730" y2="533">
        <stop offset="0" stopColor={wall} /><stop offset=".3" stopColor="#628197" /><stop offset=".75" stopColor="#9ccdeb" /><stop offset="1" stopColor="#b0defa" />
      </linearGradient>
      <linearGradient id="noseMid" gradientUnits="userSpaceOnUse" x1="650" y1="560" x2="825" y2="580">
        <stop offset="0" stopColor="#ccffff" /><stop offset=".3" stopColor="#c4f7ff" /><stop offset=".7" stopColor="#b3e5ff" /><stop offset="1" stopColor="#b5e7ff" />
      </linearGradient>
      <linearGradient id="noseLow" gradientUnits="userSpaceOnUse" x1="750" y1="600" x2="736" y2="668">
        <stop offset="0" stopColor="#b9ecff" /><stop offset=".4" stopColor="#a4d5f2" /><stop offset=".7" stopColor="#9ccbea" /><stop offset="1" stopColor="#8ab6d0" />
      </linearGradient>
      <linearGradient id="corner" gradientUnits="userSpaceOnUse" x1="838" y1="518" x2="818" y2="542">
        <stop offset="0" stopColor={wall} /><stop offset="1" stopColor="#8ab5d0" />
      </linearGradient>
      <linearGradient id="tube" gradientUnits="userSpaceOnUse" x1="1402" y1="0" x2="1451" y2="0">
        <stop offset="0" stopColor="#86b3ce" /><stop offset=".25" stopColor="#a5d5f0" /><stop offset=".45" stopColor="#fff" /><stop offset=".6" stopColor="#f4feff" /><stop offset=".75" stopColor="#9fcfec" /><stop offset=".9" stopColor="#88b4cf" /><stop offset="1" stopColor="#6f96ac" />
      </linearGradient>
      <linearGradient id="drum" gradientUnits="userSpaceOnUse" x1="0" y1="300" x2="0" y2="492">
        <stop offset="0" stopColor="#92c1df" /><stop offset=".35" stopColor="#9ccdee" /><stop offset=".52" stopColor="#90bedb" /><stop offset=".8" stopColor="#6a8fa5" /><stop offset=".95" stopColor={wall} />
      </linearGradient>
      <linearGradient id="ring" gradientUnits="userSpaceOnUse" x1="0" y1="300" x2="0" y2="480">
        <stop offset="0" stopColor="#9acaea" /><stop offset=".5" stopColor="#8dbbd8" /><stop offset=".75" stopColor="#7299b0" /><stop offset="1" stopColor={wall} />
      </linearGradient>
      <radialGradient id="shine" gradientUnits="userSpaceOnUse" cx="0" cy="0" r="1" gradientTransform="translate(1490 372) scale(15 52)">
        <stop offset="0" stopColor="#fff" /><stop offset=".3" stopColor="#e2fbff" /><stop offset="1" stopColor="#a0d0ee" stopOpacity="0" />
      </radialGradient>
      <linearGradient id="scoop" gradientUnits="userSpaceOnUse" x1="0" y1="485" x2="0" y2="575">
        <stop offset="0" stopColor={wall} /><stop offset=".3" stopColor={wall} /><stop offset="1" stopColor="#7aa0b7" />
      </linearGradient>
      <linearGradient id="hollow" gradientUnits="userSpaceOnUse" x1="1392" y1="480" x2="1425" y2="495">
        <stop offset="0" stopColor="#7ca3ba" /><stop offset="1" stopColor="#56707f" />
      </linearGradient>
      <linearGradient id="blend" gradientUnits="userSpaceOnUse" x1="1390" y1="305" x2="1430" y2="348">
        <stop offset="0" stopColor="#9bcbea" /><stop offset=".5" stopColor="#83aec9" /><stop offset=".75" stopColor="#84b0ca" /><stop offset="1" stopColor="#a5d5f2" />
      </linearGradient>
    </defs>

    <g stroke={edge} strokeWidth="1.200" strokeLinejoin="round">
      {/* underside and tail */}
      <path fill={wall} d="M735 680L900 708Q913 711 927 708L1424 627L1250 598L752 679Z" />
      <path fill={rim} d="M735 680L900 708Q913 711 927 708L752 679Z" />
      <path fill="#526978" d="M1250 598L1424 627L1455 609L1463 588L1290 559Z" />
      <path fill="#799fb5" d="M1347 414L1402 423L1450 431L1475 500L1469 575L1463 588L1290 559Z" />
      <path fill="url(#drum)" d="M1473 301L1541 312C1565 314 1587 352 1587.500 397C1588 440 1565 480 1536 494L1466 482L1490 308Z" />
      <path fill="url(#scoop)" d="M1466 482L1536 494C1500 515 1479 545 1469 575L1399 563C1412 530 1440 495 1466 482Z" />
      <path fill="#5b7687" d="M1439 454Q1448 475 1466 482C1440 495 1412 530 1399 563Q1407 495 1439 454Z" />
      <path fill="url(#hollow)" d="M1397 444Q1420 443 1439 454Q1407 510 1399 563Q1383 490 1397 444Z" />
      <path fill="#7299af" d="M1402 423L1450 431L1449 437L1439 454Q1420 443 1397 444Z" />

      {/* top blends */}
      <path fill="#9acaea" d="M1337 266L1453 285Q1462 296 1473 301Q1455 299 1442 300Q1390 298 1337 266Z" />
      <path fill="#93c2e0" d="M1337 266Q1390 298 1442 300Q1455 299 1473 301L1451 336L1427 322Q1385 305 1337 266Z" />
      <path fill="url(#blend)" d="M1337 266Q1385 305 1427 322Q1444 328 1451 336Q1425 352 1402 348Z" />
      <path fill="url(#ring)" d="M1442 300Q1460 298 1473 301C1500 309 1518 340 1518 383C1518 425 1500 465 1466 482Q1448 475 1439 454L1449 437C1475 410 1478 362 1451 336Q1440 326 1431 322Q1432 305 1442 300Z" />
      <ellipse cx="1490" cy="372" rx="15" ry="52" fill="url(#shine)" stroke="none" />
      <path fill={wall} d="M1451 336C1478 362 1475 410 1449 437Z" />
      <path fill="none" d="M1451 336Q1464 310 1488 308M1453 335Q1466 312 1489 310" />
      <path fill="#98c8e6" d="M1279.500 257L1337 266L1402 348L1347 339Z" />
      <path fill="#91c0de" d="M1347 339L1402 348V423L1347 414Z" />
      <path fill="url(#tube)" d="M1402 348Q1425 352 1451 336V428Q1450 432 1446 431L1402 423Z" />

      {/* cut rim */}
      <path fill={rim} d="M1002 302L701 463L659 470Q631 476 630.500 512Q631 520 634 531L652 602Q674 676 735 680Q744 680.500 752 679L1250 598L1290 559L1347 414V339L1279.500 257L1013 300Z" />
      {/* inside walls */}
      <path fill="#556c7b" d="M1005 317L704 477L657 486Q641 490 641.500 507Q642 513 643 517L660 587Q682 661 730 664Q741 665.500 750 664.500L1247.500 583L1282.500 550L1336 412V347L1275 272L1013 315Z" />
      <path fill="#506776" stroke="none" d="M1013 315L1275 272L1314 322L1182 344Z" />
      <path fill={wall} stroke="none" d="M1182 344L1314 322L1336 347V353L1195 376Z" />
      <path fill={wall} d="M1005 317L704 477L871 506L1172 345Z" />
      <path fill="#4f6675" d="M871 506L1172 345L1195 376L894 538Z" />
      <path fill={wall} stroke="none" d="M827 514L871 506L894 538L853 544L842 539Z" />
      <path fill={wall} stroke="none" d="M657 486L703 478L871 506L827 514Z" />
      <path fill="none" d="M1013 300V315L1182 344L1202 375M1172 345L1182 344L1314 322M1195 376L1336 353M871 506L894 538L853 544L842 539L827 514" />

      {/* nose pocket */}
      <path fill="url(#noseTop)" d="M657 486Q641 490 641.500 507Q642 513 643 517L811 545Q807 520 827 514Z" />
      <path fill="url(#corner)" d="M827 514L842 539L811 545Q807 520 827 514Z" />
      <path fill="url(#noseMid)" d="M643 517L811 545L829 616L660 587Z" />
      <path fill="url(#noseLow)" d="M660 587L829 616Q834 634 842 649L750 664.500Q741 665.500 730 664Q682 661 660 587Z" />
      <path fill="#8db8d2" d="M811 545L842 539L853 544L868 607L829 616Z" />
      <path fill="#8ab3cb" d="M829 616L868 607Q873 628 884 642L842 649Q834 634 829 616Z" />
    </g>

    {/* sketch geometry */}
    <g stroke="#6b7880" strokeWidth="1.500" fill="none">
      <path d="M630 363L804 391.500H836M1518 252L1587 263M1603 266L1461 289" />
      <path d="M1453 291L1337 310" strokeDasharray="9 6" />
      <path d="M1314 314L840 391M1290 320L900 384M1013 300L1202 332" stroke="#65666b" strokeWidth="1" strokeDasharray="11 7" opacity=".8" />
    </g>
    <g fill="#5f6c75">
      <circle cx="630" cy="363" r="2.200" /><circle cx="804" cy="391.500" r="2.200" /><circle cx="1518" cy="252" r="2.200" />
      <circle cx="1587" cy="263" r="2.200" /><circle cx="1603" cy="266" r="2.200" /><circle cx="1013" cy="300" r="2.200" />
      <circle cx="836" cy="391.500" r="2" fill="#fff" stroke="#5f6c75" />
    </g>

    <path d="M657 486L703 478L871 506L827 514Z" fill="none" stroke="#ffa500" strokeWidth="2" />
    <path d="M1219.500 329V358M1209.500 358.500H1229.500L1219.500 388Z" fill="none" stroke="#f2f5f6" strokeWidth="1.500" />
    <circle cx="983.300" cy="473.300" r="5" fill="#111" />
    <circle cx="983.300" cy="473.300" r="2.700" fill="none" stroke="#fff" strokeWidth="1.700" />
    <path d="M796.500 884L805 521" stroke="#0000ee" strokeWidth="3" />
    <path d="M805.700 507L801 522H810Z" fill="#0000ee" />
  </Scene>
);

const pale = "#dfe7ee";

const CubeDrawing = () => (
  <svg width="170" height="170" viewBox="1750 76 170 170" role="img" aria-label="View cube">
    <g fill={pale}>
      <path d="M1830 91L1837 101H1823ZM1755 166L1765 159V173ZM1905 166L1895 159V173ZM1830 241L1837 231H1823Z" />
      <path d="M1808 98L1810 104Q1795 110 1784 121L1787 124L1777 125L1776 113L1780 116Q1791 104 1808 98ZM1852 98L1850 104Q1865 110 1876 121L1873 124L1883 125L1884 113L1880 116Q1869 104 1852 98Z" />
      <path d="M1795 137L1825 131H1835L1865 137Q1871 139 1871 145L1870 180Q1868 193 1860 194L1835 199H1825L1798 194Q1792 192 1790 180L1789 145Q1790 139 1795 137Z" />
    </g>
    <g fill="#fff">
      <path d="M1799 141L1818 144Q1824 145 1824 151V176Q1824 184 1818 184L1801 186Q1794 186 1794 179L1793 148Q1793 141 1799 141ZM1861 141L1842 144Q1836 145 1836 151V176Q1836 184 1842 184L1859 186Q1867 186 1867 179V148Q1867 141 1861 141Z" />
      <circle cx="1830" cy="137" r="6" /><circle cx="1830" cy="184" r="7" />
      <path d="M1790 187L1797 197L1829 200V190Z" /><path d="M1870 187L1862 197L1831 200V190Z" />
    </g>
    <path d="M1815 193L1844 197" stroke="#888" strokeWidth="1.500" />
    <path d="M1792 188L1800 195M1868 188L1860 195M1800 196L1822 200M1860 196L1838 200" stroke={pale} />
    <path d="M1830 131V189" stroke="#2222cc" strokeWidth="1.300" />
    <path d="M1830 189L1788 196" stroke="#119911" strokeWidth="1.300" />
    <path d="M1830 189L1872 196" stroke="#dd2222" strokeWidth="1.300" />
    <text x="1830" y="126" fill="#0000dd">Z</text>
    <text x="1780" y="202" fill="#009900">Y</text>
    <text x="1879" y="202" fill="#dd1111">X</text>
    <text className="face" x="1809" y="167">Left</text>
    <text className="face" x="1850" y="167">Front</text>
  </svg>
);

const Logo = () => (
  <svg width="20" height="22" viewBox="0 0 20 22" fill="none" aria-hidden="true">
    <path d="M10 1.500L18.500 6.200V15.800L10 20.500L1.500 15.800V6.200Z" stroke="#62b944" strokeWidth="3" />
    <circle cx="10" cy="11" r="4.500" stroke="#4a8a4a" strokeWidth="1.300" />
    <path d="M10 8.500L12.200 9.700V12.300L10 13.500L7.800 12.300V9.700Z" stroke="#62b944" strokeWidth="1.300" />
    <path d="M2 15L7 8M9 20L5 14M12 2L16 9" stroke="#f8f8f8" strokeWidth="1.300" />
  </svg>
);

const Picks = ({ items }: { items: string[] }) => (
  <>{items.map((t, i) => <Pick key={i}>{t}<Remove /></Pick>)}</>
);

const Spacer = styled.div`
  height: 5px;
`;

export default function App() {
  return (
    <Page>
      <Global />
      <Header>
        <Brand href="#"><Logo />onshape</Brand>
        <Hamburger aria-label="Menu"><span /><span /><span /></Hamburger>
        <DocTitle>Caterpillar</DocTitle>
        <Branch>Main</Branch>
        <Stat $w={40} aria-label="Public document"><Icon name="globe" /></Stat>
        <Stat aria-label="Likes"><Icon name="thumb" />0</Stat>
        <Stat aria-label="Links"><Icon name="link" />0</Stat>
        <Stat aria-label="Copies"><Icon name="copy" />0</Stat>
        <HeaderRight>
          <button aria-label="Checks"><Icon name="bracesCheck" size={20} /></button>
          <BellButton aria-label="Notifications"><Icon name="bell" /><Badge>1</Badge></BellButton>
          <HeaderButton $w={88}>App Store</HeaderButton>
          <HeaderButton $w={125}>Learning Center</HeaderButton>
          <HeaderButton $w={62} $primary>Share</HeaderButton>
          <MenuButton aria-label="Help"><Icon name="help" /><Caret /></MenuButton>
          <MenuButton>
            <svg width="24" height="24" viewBox="0 0 24 24" aria-hidden="true">
              <circle cx="12" cy="12" r="12" fill={blue} />
              <path d="M12 4.500Q18 5 17.500 11Q17 15 14.500 17Q16 19 19.500 20.500Q16 24 12 24T4.500 20.500Q8 19 9.500 17Q7 15 6.500 11Q6 5 12 4.500Z" fill="#fff" />
            </svg>
            Study Example<Caret />
          </MenuButton>
        </HeaderRight>
      </Header>
      <Main>
        <Rail>
          {["featureList", "insertFeature", "comment", "history"].map((n) => (
            <RailButton key={n} aria-label={n}><Icon name={n} /></RailButton>
          ))}
          <RailButton $last aria-label="Find tab"><Icon name="findTab" /></RailButton>
        </Rail>
        <Column>
          <Toolbar>
            <ToolButton aria-label="Undo"><Icon name="undo" /></ToolButton>
            <ToolButton aria-label="Redo"><Icon name="redo" /></ToolButton>
            <Divider />
            <ToolButton $w={86}><Icon name="sketch" />Sketch</ToolButton>
            {toolGroups.map((g, i) => (
              <React.Fragment key={i}>
                <Divider />
                {g.map((n, j) => <Tool key={j} name={n} />)}
              </React.Fragment>
            ))}
            <SearchBox>
              <input type="text" placeholder="Search tools..." aria-label="Search tools" />
              <Key>alt</Key><Key>C</Key>
            </SearchBox>
          </Toolbar>
          <Workspace>
            <Panel>
              <PanelHead>
                <h2>Features (17)</h2>
                <button aria-label="New folder"><Icon name="newFolder" /></button>
                <button aria-label="Regeneration times"><Icon name="stopwatch" /></button>
              </PanelHead>
              <FilterRow>
                <Icon name="filter" />
                <input type="text" placeholder="Filter by name or type" aria-label="Filter features" />
              </FilterRow>
              <ListArea>
                <FeatureList>
                  <Row $left={23}>Default geometry</Row>
                  <Branches>
                    <Row $left={13}><Icon name="origin" />Origin</Row>
                    {["Top", "Front", "Right"].map((t) => (
                      <Row key={t} $left={15} $dim><Icon name="plane" size={16} dim />{t}</Row>
                    ))}
                  </Branches>
                  {features.map((f) => (
                    <Row key={f.text} $dim={f.dim} $tone={f.tone}>
                      <Icon name={f.icon} size={16} dim={f.dim} />{f.text}
                    </Row>
                  ))}
                  <RollbackBar />
                </FeatureList>
                <ScrollTrack><UpCaret /><ScrollThumb /><Caret /></ScrollTrack>
              </ListArea>
              <PartsHead><Chevron size={12} />Parts (1)</PartsHead>
              <PartBranch><Row $tone="hover">Part 1</Row></PartBranch>
            </Panel>
            <Viewport>
              <Model />
              <ViewNav><CubeDrawing /></ViewNav>
              <ViewMenu aria-label="View options"><Icon name="viewCube" /><Caret /></ViewMenu>
              <Dock>
                <DockButton aria-label="Appearance"><Icon name="appearance" size={20} /></DockButton>
                <DockButton aria-label="Part table"><Icon name="partTable" size={20} /></DockButton>
                <DockButton aria-label="Cut list"><Icon name="cutTable" size={20} /></DockButton>
                <DockButton aria-label="Variables"><VarText><i>(</i>x<i>)</i></VarText><MiniGrid /></DockButton>
              </Dock>
              <OutlineButton aria-label="Show outline"><Icon name="outline" /></OutlineButton>
              <Dialog>
                <DialogHead>
                  <h2>Extrude 3</h2>
                  <HeadButton type="button" $ok aria-label="Accept">
                    <svg width="16" height="14" viewBox="0 0 16 14" fill="none" stroke="#fff" strokeWidth="3"><path d="M1 6.500L6 11.500L15 1.500" /></svg>
                  </HeadButton>
                  <HeadButton type="button" aria-label="Cancel">
                    <svg width="12" height="12" viewBox="0 0 12 12" fill="none" stroke="#e0522b" strokeWidth="3.200"><path d="M1.500 1.500L10.500 10.500M10.500 1.500L1.500 10.500" /></svg>
                  </HeadButton>
                </DialogHead>
                <Tabs><Tab type="button" $w={103} $on>Solid</Tab><Tab type="button" $w={117}>Surface</Tab></Tabs>
                <Tabs>
                  <Tab type="button" $w={44}>New</Tab><Tab type="button" $w={43}>Add</Tab>
                  <Tab type="button" $w={65} $on>Remove</Tab><Tab type="button" $w={68}>Intersect</Tab>
                </Tabs>
                <Spacer />
                <PickBox>
                  <small>Faces and sketch regions to extrude</small>
                  <Picks items={["Face of Sketch 3", "Face of Sketch 3", "Face of Sketch 3"]} />
                </PickBox>
                <SelectRow>
                  <SelectWrap>
                    <select aria-label="End type" defaultValue="face"><option value="face">Up to face</option></select>
                    <Caret />
                  </SelectWrap>
                  <FlipButton type="button" aria-label="Flip direction"><Icon name="flip" /></FlipButton>
                </SelectRow>
                <SideBySide>
                  <PickBox $active><small>Up to face</small><Picks items={["Face of Shell 1"]} /></PickBox>
                  <SideButton type="button" aria-label="Mate connector"><Icon name="clock" /></SideButton>
                </SideBySide>
                <Checks>
                  {["Offset distance", "Draft", "Second end position", "Merge with all"].map((t) => (
                    <Check key={t}><input type="checkbox" />{t}</Check>
                  ))}
                </Checks>
                <PickBox><small>Merge scope</small><Picks items={["Part 1"]} /></PickBox>
                <DialogFoot>
                  <input type="range" min="0" max="100" defaultValue="71" aria-label="Preview opacity" />
                  <button type="button" aria-label="Dialog help"><Icon name="help" size={12} /></button>
                </DialogFoot>
              </Dialog>
            </Viewport>
          </Workspace>
          <SheetBar>
            <AddSheet aria-label="Add tab">
              <svg width="16" height="16" viewBox="0 0 16 16" stroke="#666" strokeWidth="3"><path d="M8 1V15M1 8H15" /></svg>
            </AddSheet>
            <SheetTab $on><Icon name="body" />Body</SheetTab>
            <SheetTab><Icon name="assembly" />Assembly 1</SheetTab>
          </SheetBar>
        </Column>
      </Main>
    </Page>
  );
}
